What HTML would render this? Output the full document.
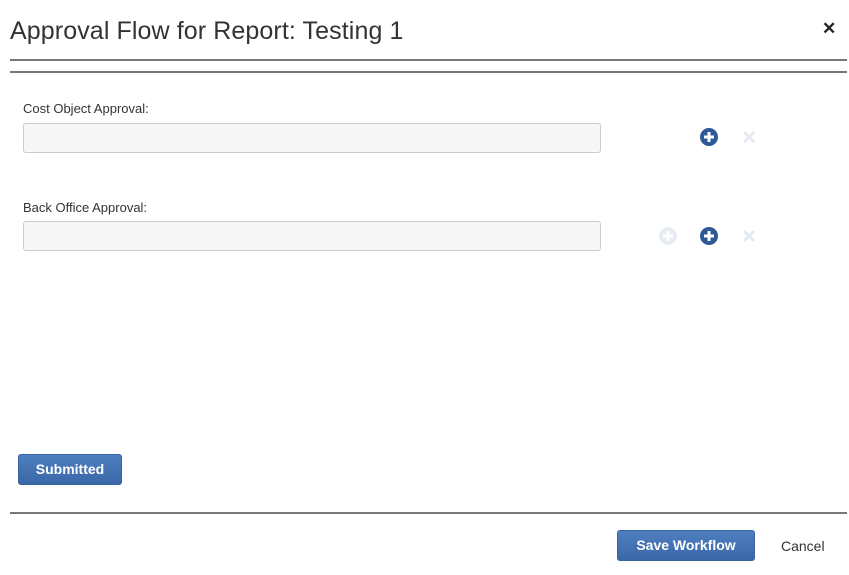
<!DOCTYPE html>
<html><head><style>
body{margin:0;width:849px;height:575px;background:#fff;font-family:"Liberation Sans",Arial,sans-serif;position:relative;overflow:hidden}
.a{position:absolute}
.title{left:10px;top:17px;font-size:25px;color:#333;white-space:nowrap;letter-spacing:0.1px}
.close{left:822px;top:19px;font-size:17px;font-weight:bold;color:#222}
.hr{left:10px;width:837px;height:2px;background:#777}
.lbl{left:23px;font-size:13px;color:#333}
.inp{left:23px;width:576px;height:28px;border:1px solid #ccc;border-radius:3px;background:#f7f7f7}
.ic{width:20px;height:20px}
.btn{background:linear-gradient(#4f7fc0,#3a67a8);border:1px solid #3864a3;border-radius:3px;color:#fff;font-weight:bold;font-size:14px;text-align:center;box-sizing:border-box}
</style></head><body>
<div class="a title">Approval Flow for Report: Testing 1</div>
<div class="a close">✕</div>
<div class="a hr" style="top:59px"></div>
<div class="a hr" style="top:71px"></div>
<div class="a lbl" style="top:101px">Cost Object Approval:</div>
<div class="a inp" style="top:123px"></div>
<svg class="a ic" style="left:699px;top:127px" viewBox="0 0 20 20"><circle cx="10" cy="10" r="9" fill="#2d5a96"/><path d="M10 5v10M5 10h10" stroke="#fff" stroke-width="3"/></svg>
<svg class="a ic" style="left:739px;top:127px" viewBox="0 0 20 20"><path d="M5 5l10 10M15 5L5 15" stroke="#e3eaf1" stroke-width="3"/></svg>
<div class="a lbl" style="top:200px">Back Office Approval:</div>
<div class="a inp" style="top:221px"></div>
<svg class="a ic" style="left:658px;top:226px" viewBox="0 0 20 20"><circle cx="10" cy="10" r="9" fill="#e6ecf2"/><path d="M10 5v10M5 10h10" stroke="#fff" stroke-width="3"/></svg>
<svg class="a ic" style="left:699px;top:226px" viewBox="0 0 20 20"><circle cx="10" cy="10" r="9" fill="#2d5a96"/><path d="M10 5v10M5 10h10" stroke="#fff" stroke-width="3"/></svg>
<svg class="a ic" style="left:739px;top:226px" viewBox="0 0 20 20"><path d="M5 5l10 10M15 5L5 15" stroke="#e3eaf1" stroke-width="3"/></svg>
<div class="a btn" style="left:18px;top:454px;width:104px;height:31px;line-height:29px">Submitted</div>
<div class="a hr" style="top:512px"></div>
<div class="a btn" style="left:617px;top:530px;width:138px;height:31px;line-height:29px">Save Workflow</div>
<div class="a" style="left:781px;top:538px;font-size:14px;color:#333">Cancel</div>
</body></html>
